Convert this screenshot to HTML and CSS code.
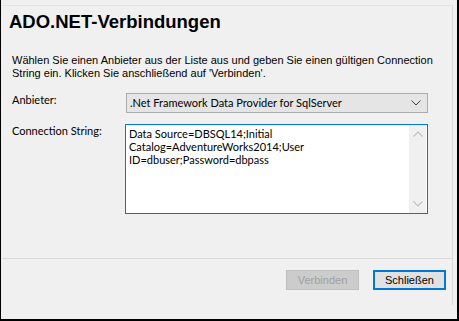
FILE: index.html
```html
<!DOCTYPE html>
<html lang="de">
<head>
<meta charset="utf-8">
<link rel="stylesheet" href="styles.css">
</head>
<body>
<div class="window">
  <div class="frame">
    <h1 class="title">ADO.NET-Verbindungen</h1>
    <p class="desc">Wählen Sie einen Anbieter aus der Liste aus und geben Sie einen gültigen Connection<br>String ein. Klicken Sie anschließend auf 'Verbinden'.</p>
    <div class="form">
      <label class="label label-provider">Anbieter:</label>
      <div class="select">
        <span class="select-text">.Net Framework Data Provider for SqlServer</span>
        <svg class="chev" width="10" height="6" viewBox="0 0 10 6"><path d="M0.5 0.5 L5 5 L9.5 0.5" fill="none" stroke="#404040" stroke-width="1"/></svg>
      </div>
      <label class="label label-conn">Connection String:</label>
      <div class="textarea">
        <div class="ta-text">Data Source=DBSQL14;Initial<br>Catalog=AdventureWorks2014;User<br>ID=dbuser;Password=dbpass</div>
        <div class="scrollbar">
          <svg width="10" height="6" viewBox="0 0 10 6"><path d="M0.5 5.5 L5 1 L9.5 5.5" fill="none" stroke="#c0c0c0" stroke-width="1.2"/></svg>
          <svg width="10" height="6" viewBox="0 0 10 6"><path d="M0.5 0.5 L5 5 L9.5 0.5" fill="none" stroke="#c0c0c0" stroke-width="1.2"/></svg>
        </div>
      </div>
    </div>
    <div class="sep"></div>
    <div class="buttons">
      <button class="btn btn-disabled">Verbinden</button>
      <button class="btn btn-default">Schließen</button>
    </div>
  </div>
</div>
</body>
</html>
```

FILE: styles.css
```css
* { box-sizing: border-box; }
body { margin: 0; background: #f0f0f0; }
.window {
  width: 459px; height: 321px;
  background: #f0f0f0;
  border-left: 1px solid #000;
  border-right: 2px solid #000;
  border-bottom: 2px solid #000;
  display: flex; flex-direction: column;
}
.frame {
  margin: 5px 4px 14px 0;
  border-top: 1px solid #e3e3e3;
  border-right: 1px solid #dadada;
  flex: 1;
  display: flex; flex-direction: column;
}
.title {
  margin: 4px 0 0 8px;
  font: bold 18.5px/24px "Liberation Sans", Arial, sans-serif;
  color: #000;
}
.desc {
  margin: 20px 0 0 11px;
  font: 11px/13px "Liberation Sans", Arial, sans-serif;
  color: #000;
}
.form {
  margin: 13px 0 0 11px;
  display: grid;
  grid-template-columns: 114px 302px;
  row-gap: 11px;
}
.label {
  font: 11px/13px "Lato", "Liberation Sans", sans-serif;
  color: #000;
}
.select {
  height: 20px;
  background: #e5e5e5;
  border: 1px solid #adadad;
  display: flex; align-items: center; justify-content: space-between;
  padding: 0 6px 0 3px;
  font: 11px/14px "Lato", "Liberation Sans", sans-serif;
}
.textarea {
  height: 90px;
  margin-left: -1px;
  background: #fff;
  border: 1px solid #0078d7;
  display: flex; justify-content: space-between;
}
.ta-text {
  padding: 2px 0 0 3px;
  font: 11px/13px "Lato", "Liberation Sans", sans-serif;
  color: #000;
}
.scrollbar {
  width: 17px;
  margin-right: 1px;
  background: #f0f0f0;
  display: flex; flex-direction: column; justify-content: space-between; align-items: center;
  padding: 6px 0 6px;
}
.sep {
  margin-top: 44px;
  height: 1px;
  background: #dadada;
  margin-right: -1px;
}
.buttons {
  margin-top: 11px;
  display: flex; justify-content: flex-end; gap: 14px;
  padding-right: 6px;
}
.btn {
  width: 73px; height: 20px;
  font: 11px/14px "Liberation Sans", Arial, sans-serif;
  padding: 0;
  margin: 0;
}
.btn-disabled {
  background: #cccccc;
  border: 1px solid #bfbfbf;
  color: #a0a0a0;
}
.btn-default {
  background: #e1e1e1;
  border: 2px solid #0078d7;
  color: #000;
}
```
